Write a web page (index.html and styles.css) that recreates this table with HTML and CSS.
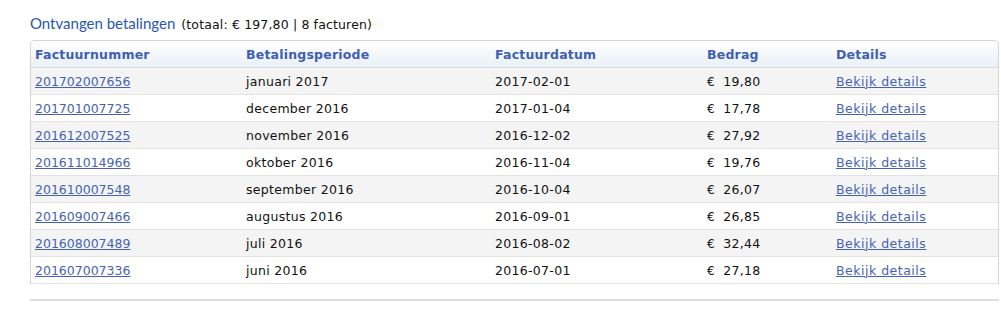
FILE: index.html
```html
<!DOCTYPE html>
<html lang="nl">
<head>
<meta charset="utf-8">
<title>Ontvangen betalingen</title>
<link rel="stylesheet" href="styles.css">
</head>
<body>
<div class="page">
  <h2 class="title"><span class="title-main">Ontvangen betalingen</span> <span class="title-sub">(totaal: € 197,80 | 8 facturen)</span></h2>
  <table class="invoices">
    <colgroup>
      <col class="c1"><col class="c2"><col class="c3"><col class="c4"><col class="c5">
    </colgroup>
    <thead>
      <tr><th>Factuurnummer</th><th>Betalingsperiode</th><th>Factuurdatum</th><th>Bedrag</th><th>Details</th></tr>
    </thead>
    <tbody>
      <tr><td><a class="num" href="#">201702007656</a></td><td>januari 2017</td><td>2017-02-01</td><td><span class="eur">€</span> 19,80</td><td><a href="#">Bekijk details</a></td></tr>
      <tr><td><a class="num" href="#">201701007725</a></td><td>december 2016</td><td>2017-01-04</td><td><span class="eur">€</span> 17,78</td><td><a href="#">Bekijk details</a></td></tr>
      <tr><td><a class="num" href="#">201612007525</a></td><td>november 2016</td><td>2016-12-02</td><td><span class="eur">€</span> 27,92</td><td><a href="#">Bekijk details</a></td></tr>
      <tr><td><a class="num" href="#">201611014966</a></td><td>oktober 2016</td><td>2016-11-04</td><td><span class="eur">€</span> 19,76</td><td><a href="#">Bekijk details</a></td></tr>
      <tr><td><a class="num" href="#">201610007548</a></td><td>september 2016</td><td>2016-10-04</td><td><span class="eur">€</span> 26,07</td><td><a href="#">Bekijk details</a></td></tr>
      <tr><td><a class="num" href="#">201609007466</a></td><td>augustus 2016</td><td>2016-09-01</td><td><span class="eur">€</span> 26,85</td><td><a href="#">Bekijk details</a></td></tr>
      <tr><td><a class="num" href="#">201608007489</a></td><td>juli 2016</td><td>2016-08-02</td><td><span class="eur">€</span> 32,44</td><td><a href="#">Bekijk details</a></td></tr>
      <tr><td><a class="num" href="#">201607007336</a></td><td>juni 2016</td><td>2016-07-01</td><td><span class="eur">€</span> 27,18</td><td><a href="#">Bekijk details</a></td></tr>
    </tbody>
  </table>
  <div class="divider"></div>
</div>
</body>
</html>
```
FILE: styles.css
```css
html, body {
  margin: 0;
  padding: 0;
  background: #ffffff;
}
.page {
  padding: 13px 2px 0 30px;
  font-family: "DejaVu Sans", Verdana, sans-serif;
  font-size: 12.5px;
  color: #111111;
}
.title {
  margin: 0 0 8px 0;
  font-weight: normal;
  line-height: 19px;
  height: 19px;
}
.title-main {
  font-family: Lato, "Open Sans", sans-serif;
  font-size: 15px;
  color: #2a57b0;
}
.title-sub {
  font-size: 12.5px;
  color: #111111;
  letter-spacing: 0.15px;
}
.invoices {
  width: 969px;
  border-collapse: separate;
  border-spacing: 0;
  table-layout: fixed;
  border: 1px solid #d4d4d4;
  border-bottom: none;
  border-radius: 5px 5px 0 0;
}
.c1 { width: 211px; }
.c2 { width: 249px; }
.c3 { width: 212px; }
.c4 { width: 129px; }
.c5 { width: auto; }
.invoices th {
  text-align: left;
  font-weight: bold;
  color: #3d5fb3;
  height: 26px;
  padding: 0 4px;
  letter-spacing: 0.2px;
  background: linear-gradient(#ffffff, #e9f0f8);
  border-bottom: 1px solid #dcdcdc;
}
.invoices th:first-child { border-top-left-radius: 5px; }
.invoices th:last-child { border-top-right-radius: 5px; }
.invoices td {
  height: 26px;
  padding: 0 4px;
  border-bottom: 1px solid #e2e2e2;
  white-space: nowrap;
  letter-spacing: 0.3px;
}
.invoices tbody tr:nth-child(odd) td { background: #f4f4f4; }
.invoices tbody tr:nth-child(even) td { background: #ffffff; }
.invoices a {
  color: #4663b3;
  text-decoration: underline;
  letter-spacing: 0.5px;
}
.invoices a.num {
  letter-spacing: 0;
}
.eur {
  font-size: 12px;
  margin-right: 4px;
}
.divider {
  margin-top: 15px;
  width: 969px;
  height: 0;
  border-top: 2px solid #dedede;
}
```
